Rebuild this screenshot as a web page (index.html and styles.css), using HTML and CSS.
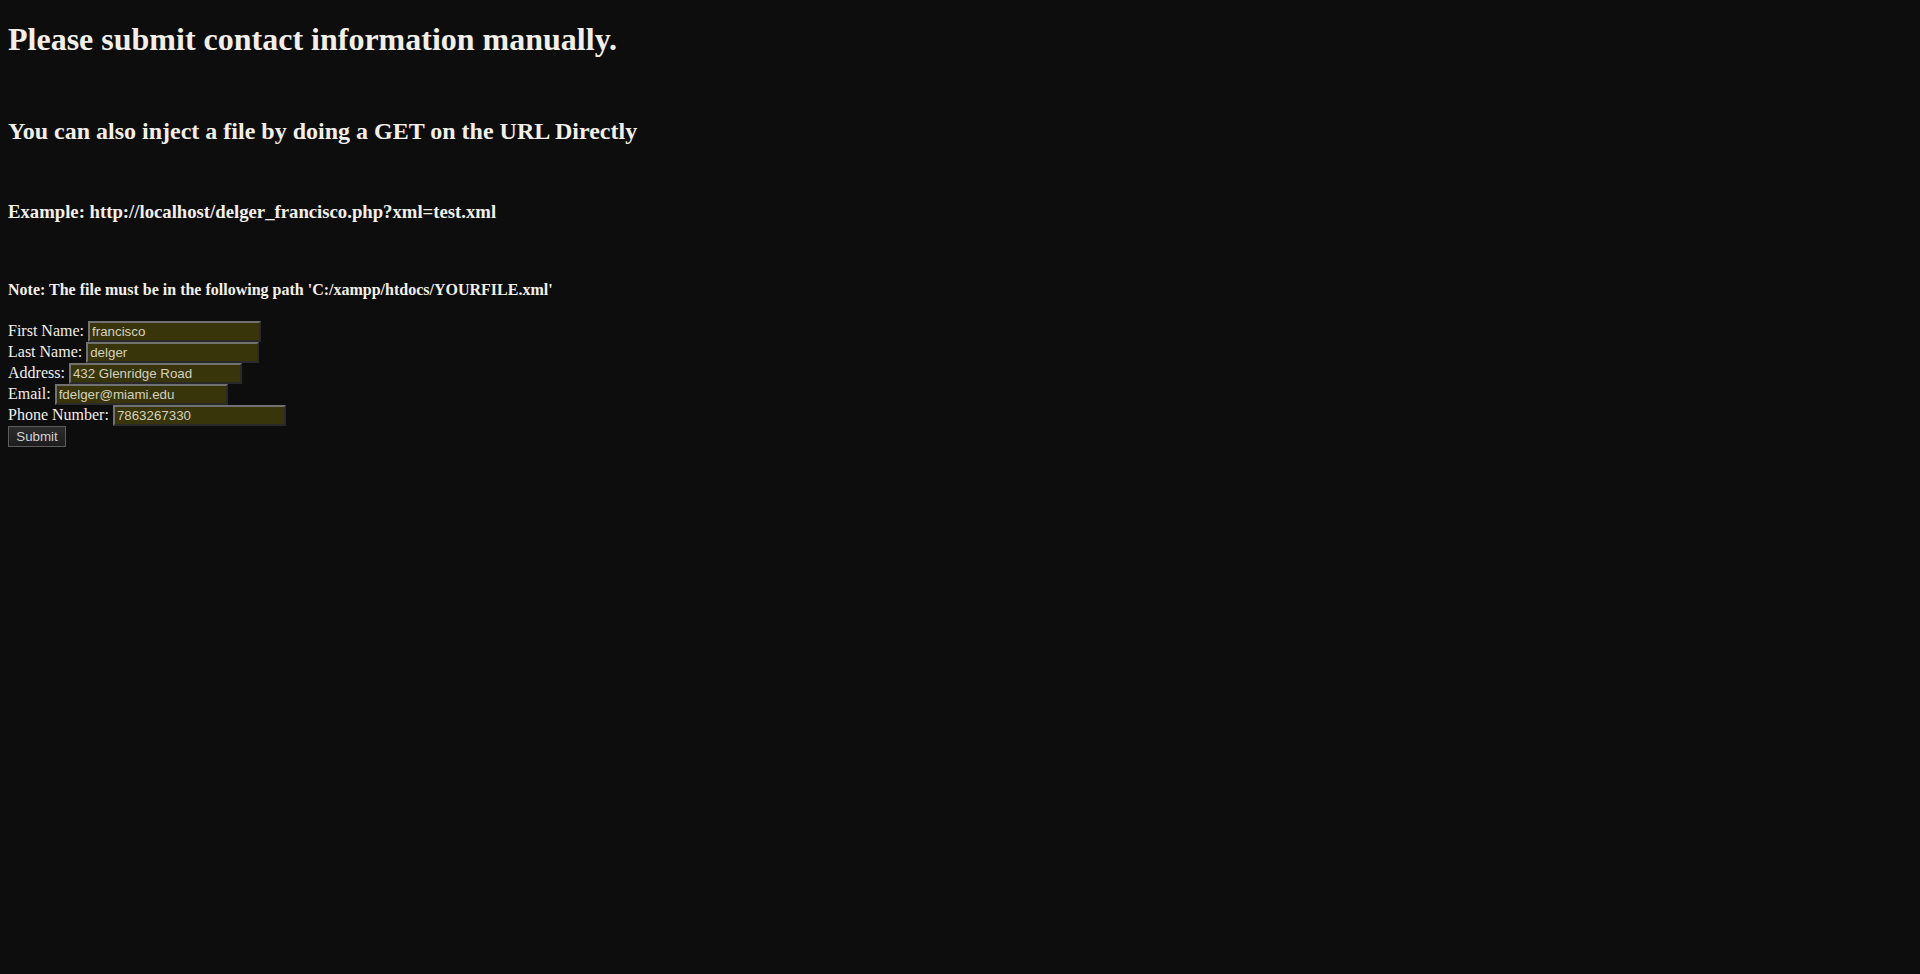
FILE: index.html
```html
<!DOCTYPE html>
<html>
<head>
<meta charset="utf-8">
<title>Contact</title>
<link rel="stylesheet" href="styles.css">
</head>
<body class="page">
<h1 class="title">Please submit contact information manually.</h1><br>
<h2 class="sub">You can also inject a file by doing a GET on the URL Directly</h2><br>
<h3 class="example">Example: http://localhost/delger_francisco.php?xml=test.xml</h3><br>
<h4 class="note">Note: The file must be in the following path 'C:/xampp/htdocs/YOURFILE.xml'</h4>
<form class="contact">
First Name: <input class="field" type="text" value="francisco"><br>
Last Name: <input class="field" type="text" value="delger"><br>
Address: <input class="field" type="text" value="432 Glenridge Road"><br>
Email: <input class="field" type="text" value="fdelger@miami.edu"><br>
Phone Number: <input class="field" type="text" value="7863267330"><br>
<input class="submit" type="button" value="Submit">
</form>
</body>
</html>
```
FILE: styles.css
```css
html {
  background: #0d0d0d;
}
.page {
  margin: 0 8px 8px;
  background: #0d0d0d;
  color: #f2efe9;
  font-family: "Liberation Serif", "Times New Roman", serif;
  font-size: 16px;
}
.title {
  font-size: 32px;
  margin: 21.44px 0;
}
.sub {
  font-size: 24px;
  margin: 19.92px 0;
}
.example {
  font-size: 18.72px;
  margin: 18.72px 0;
}
.note {
  font-size: 16px;
  margin: 21.28px 0;
}
.contact {
  margin: 0;
}
.field {
  box-sizing: border-box;
  width: 173px;
  height: 21px;
  margin: 0;
  padding: 1px 2px;
  font-family: "Liberation Sans", Arial, sans-serif;
  font-size: 13.33px;
  color: #d4d0bf;
  background: #38350b;
  border-style: solid;
  border-width: 2px;
  border-color: #717171 #2a2a2a #2a2a2a #717171;
  outline: none;
}
.submit {
  box-sizing: border-box;
  width: 58px;
  height: 21px;
  margin: 0;
  padding: 1px 6px;
  font-family: "Liberation Sans", Arial, sans-serif;
  font-size: 13.33px;
  color: #d2d2d2;
  background: linear-gradient(#2c2c2c, #1d1d1d);
  border: 1px solid #5c5c5c;
  border-radius: 0;
}
```
